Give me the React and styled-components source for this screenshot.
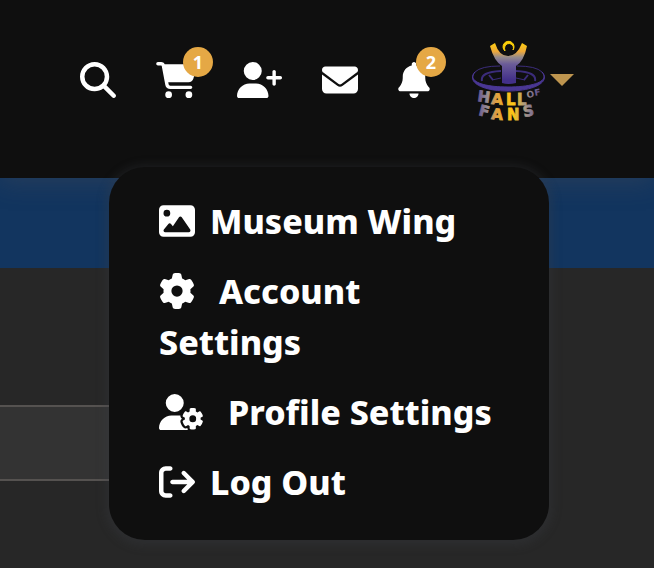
import React from "react";
import styled, { createGlobalStyle } from "styled-components";
import {
  FaMagnifyingGlass,
  FaCartShopping,
  FaUserPlus,
  FaEnvelope,
  FaBell,
  FaImage,
  FaGear,
  FaUserGear,
  FaArrowRightFromBracket,
} from "react-icons/fa6";

const GlobalStyle = createGlobalStyle`
  *, *::before, *::after { box-sizing: border-box; }
  html, body, #root { height: 100%; }
  body {
    margin: 0;
    background: #272727;
    color: #fff;
    font-family: "Noto Sans", sans-serif;
  }
`;

const Page = styled.div`
  min-height: 100%;
  display: flex;
  flex-direction: column;
  overflow: hidden;
`;

const Header = styled.header`
  position: relative;
  z-index: 2;
  background: #0f0f0f;
  box-shadow: 0 4px 24px rgba(72, 76, 84, 0.4);
  padding: 36px 80px 54px;
`;

const Toolbar = styled.nav`
  display: flex;
  justify-content: flex-end;
  align-items: center;
  gap: 40px;
  height: 88px;
`;

const IconButton = styled.button`
  position: relative;
  display: flex;
  padding: 0;
  border: 0;
  background: none;
  color: #fff;
  cursor: pointer;

  svg { display: block; flex: none; }
`;

const ToolButton = styled(IconButton)`
  svg {
    width: ${(p) => p.$width}px;
    height: 36px;
  }
`;

const ProfileButton = styled(IconButton)`
  align-items: center;
  gap: 4px;
`;

const Badge = styled.span`
  position: absolute;
  right: -16px;
  top: -15px;
  width: 30px;
  height: 30px;
  border-radius: 50%;
  background: #e5a845;
  font-family: "Noto Sans", sans-serif;
  font-size: 18px;
  font-weight: 700;
  line-height: 30px;
  text-align: center;
`;

const Menu = styled.ul`
  position: absolute;
  top: 167px;
  right: 105px;
  width: 440px;
  margin: 0;
  padding: 29px 50px 32px;
  display: flex;
  flex-direction: column;
  gap: 19px;
  list-style: none;
  border-radius: 36px;
  background: #0f0f0f;
  box-shadow: 0 2px 10px 4px rgba(58, 62, 68, 0.3);
`;

const MenuLink = styled.a`
  display: block;
  color: #fff;
  font-size: 34px;
  font-weight: 800;
  line-height: 51px;
  text-decoration: none;

  svg {
    width: ${(p) => p.$width}px;
    height: 36px;
    vertical-align: -5px;
    margin-right: ${(p) => (p.$wide ? 24 : 15)}px;
  }
`;

const Banner = styled.div`
  height: 90px;
  background: #12355f;
`;

const Content = styled.main`
  flex: 1;
  padding-top: 137px;
  background: #272727;
`;

const Field = styled.input`
  display: block;
  width: 50%;
  height: 76px;
  padding: 0 20px;
  border: solid #555250;
  border-width: 2px 0;
  border-radius: 0;
  background: #333;
  color: #fff;
  font: 24px "Noto Sans", sans-serif;
`;

function Logo() {
  return (
    <svg width="76" height="88" viewBox="0 0 76 88" aria-label="Hall of Fans" role="img">
      <defs>
        <linearGradient id="body" gradientUnits="userSpaceOnUse" x1="0" y1="6" x2="0" y2="44">
          <stop offset="0" stopColor="#ffd20a" />
          <stop offset="0.25" stopColor="#eda83a" />
          <stop offset="0.4" stopColor="#948a8c" />
          <stop offset="0.58" stopColor="#6b5c98" />
          <stop offset="1" stopColor="#43308a" />
        </linearGradient>
        <linearGradient id="word" gradientUnits="userSpaceOnUse" x1="6" y1="0" x2="70" y2="0">
          <stop offset="0" stopColor="#5a4a92" />
          <stop offset="0.18" stopColor="#9a8f92" />
          <stop offset="0.32" stopColor="#e0a040" />
          <stop offset="0.58" stopColor="#ffc914" />
          <stop offset="0.78" stopColor="#a3948c" />
          <stop offset="1" stopColor="#5a4a92" />
        </linearGradient>
      </defs>
      <path
        d="M5 36 C-4 46 12 55 38 55 S81 46 72 36 C80 45 64 51 38 51 S-3 45 5 36Z"
        fill="#4a3794"
        stroke="#4a3794"
      />
      <g fill="none" stroke="#3b2c7a">
        <path d="M5 36 Q11 30 30 30 M47 30 Q66 30 72 36" strokeWidth="1" />
        <path d="M12 45 Q10 36 31 35 M46 35 Q67 36 65 45" strokeWidth="2" />
        <path d="M19 39 L23 44 M58 39 L54 44" strokeWidth="2" />
        <path d="M22 44 L31 42 M55 44 L46 42" strokeWidth="1" />
      </g>
      <path
        d="M20 10 L25 7 Q29 20 38 20 T52 7 L57 10 Q54 25 46 30 L46 47 Q38 49 32 47 L32 30 Q24 25 20 10Z"
        fill="url(#body)"
      />
      <path
        d="M35 15 A5.5 5.5 0 1 1 43 14 A4 4 0 1 0 35 10 Q34 12 35 15Z"
        fill="#ffd20a"
        stroke="#ffd20a"
      />
      <g
        fill="url(#word)"
        stroke="url(#word)"
        strokeWidth="0.8"
        fontFamily="DejaVu Sans"
        fontWeight="700"
        fontSize="15"
      >
        <text x="7 21 36 47" y="65 68 69 69" rotate="8 4 0 0">HALL</text>
        <text x="8 21 37 54" y="79 83 84 81" rotate="14 5 0 -10">FANS</text>
        <text x="57 65" y="62 60" rotate="-8 -10" fontSize="9" strokeWidth="0">OF</text>
      </g>
    </svg>
  );
}

function Caret() {
  return (
    <svg width="24" height="12" viewBox="0 0 24 12" aria-hidden="true">
      <path d="M0 0H24L12 12Z" fill="#be954f" />
    </svg>
  );
}

const tools = [
  { label: "Search", Icon: FaMagnifyingGlass, width: 36 },
  { label: "Cart", Icon: FaCartShopping, width: 41, count: 1 },
  { label: "Add friend", Icon: FaUserPlus, width: 45 },
  { label: "Messages", Icon: FaEnvelope, width: 36 },
  { label: "Notifications", Icon: FaBell, width: 32, count: 2 },
];

const links = [
  { label: "Museum Wing", Icon: FaImage, width: 36 },
  { label: "Account Settings", Icon: FaGear, width: 36, wide: true },
  { label: "Profile Settings", Icon: FaUserGear, width: 45, wide: true },
  { label: "Log Out", Icon: FaArrowRightFromBracket, width: 36 },
];

export default function App() {
  return (
    <>
      <GlobalStyle />
      <Page>
        <Header>
          <Toolbar>
            {tools.map(({ label, Icon, width, count }) => (
              <ToolButton key={label} type="button" aria-label={label} $width={width}>
                <Icon />
                {count && <Badge>{count}</Badge>}
              </ToolButton>
            ))}
            <ProfileButton type="button" aria-label="Profile menu" aria-expanded="true">
              <Logo />
              <Caret />
            </ProfileButton>
          </Toolbar>
          <Menu>
            {links.map(({ label, Icon, width, wide }) => (
              <li key={label}>
                <MenuLink href="#" $width={width} $wide={wide}>
                  <Icon />
                  {label}
                </MenuLink>
              </li>
            ))}
          </Menu>
        </Header>
        <Banner />
        <Content>
          <Field type="text" aria-label="Search the museum" />
        </Content>
      </Page>
    </>
  );
}
